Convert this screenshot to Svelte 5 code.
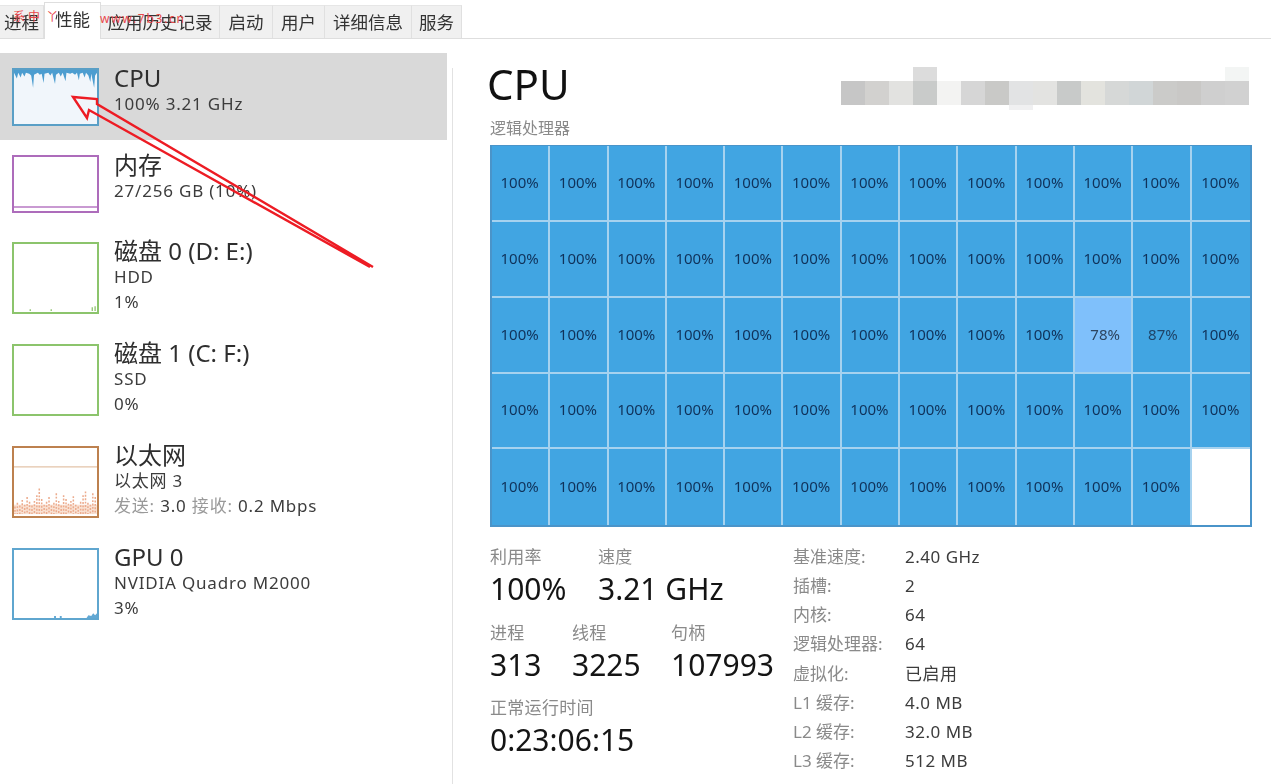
<script>
  const tabs = [
    { label: '进程', w: 44 },
    { label: '性能', w: 57, active: true },
    { label: '应用历史记录', w: 119 },
    { label: '启动', w: 53 },
    { label: '用户', w: 52 },
    { label: '详细信息', w: 87 },
    { label: '服务', w: 50 }
  ];

  const mosaic = [
    '#c6c6c6', '#d2d1cf', '#e2e2e0', '#c9cbca', '#f3f3f2', '#d6d6d6', '#c9c9c7', '#e2e3e4', '#e3e3e1',
    '#c8cac9', '#e3e3de', '#d6d8d7', '#d1d6d7', '#cbcbc9', '#c9c8c6', '#cfcfcf', '#d1d1d1'
  ];

  const cells = [];
  for (let i = 0; i < 65; i++) {
    let v = '100%';
    if (i === 36) v = '78%';
    if (i === 37) v = '87%';
    if (i === 64) v = '';
    cells.push(v);
  }

  const specs = [
    ['基准速度:', '2.40 GHz'], ['插槽:', '2'], ['内核:', '64'], ['逻辑处理器:', '64'],
    ['虚拟化:', '已启用'], ['L1 缓存:', '4.0 MB'], ['L2 缓存:', '32.0 MB'], ['L3 缓存:', '512 MB']
  ];

  // x offset, depth of the blue trace hanging from the top of the CPU thumbnail
  const cpuTrace = [
    [0,3],[3,9],[4.5,3],[7,8],[8.5,3],[11,7],[12.5,3],[16,4],[18,6],[20,19],[21,5],[25,3],[27,5],[29,4],
    [31,14],[32,4],[36,3],[38,6],[40,3],[43,15],[44,5],[47,3],[49,7],[51,3],[54,12],[55,3],[59,4],
    [61,3],[64,5],[66,3],[68,11],[69,4],[72,3],[74,8],[75.5,3],[78,6],[80,13],[81,4],[84,19],[85,6],[87,3]
  ];
  const cpuPts = '0,0 ' + cpuTrace.map((p) => `${p[0]},${p[1]}`).join(' ') + ' 87,0';

  const ethHeights = [8,12,9,15,10,18,13,9,14,20,27,16,10,13,18,9,12,22,14,9,20,16,11,14,19,10,8,13,20,24,12,10,22,18];

  const items = [
    { title: 'CPU', lines: ['100% 3.21 GHz'], kind: 'cpu', h: 58, selected: true },
    { title: '内存', lines: ['27/256 GB (10%)'], kind: 'mem', h: 58 },
    { title: '磁盘 0 (D: E:)', lines: ['HDD', '1%'], kind: 'disk', h: 72 },
    { title: '磁盘 1 (C: F:)', lines: ['SSD', '0%'], kind: 'disk', h: 72 },
    { title: '以太网', lines: ['以太网 3'], net: ['发送:', '3.0', '接收:', '0.2 Mbps'], kind: 'eth', h: 72 },
    { title: 'GPU 0', lines: ['NVIDIA Quadro M2000', '3%'], kind: 'gpu', h: 72 }
  ];
</script>

<div class="page">
  <nav class="tabs soft">
    {#each tabs as t}
      <div class="tab" class:active={t.active} style="width:{t.w}px">{t.label}</div>
    {/each}
  </nav>

  <div class="main">
    <aside class="side soft">
      {#each items as it}
        <div class="item" class:selected={it.selected} class:tall={it.h === 72}>
          <div class="thumb {it.kind}" style="height:{it.h}px">
            {#if it.kind === 'cpu'}
              <svg viewBox="0 0 87 58" preserveAspectRatio="none"><polygon points={cpuPts} fill="#4c9dd0" /></svg>
            {:else if it.kind === 'mem'}
              <div class="memline"></div>
            {:else if it.kind === 'disk'}
              {#if it.title.includes('D:')}
                <svg viewBox="0 0 87 72" preserveAspectRatio="none"><path d="M17 71V69M39 71V69M82 71V67M85 71V66" stroke="#7fbb5a" stroke-width="1.2" fill="none" /></svg>
              {/if}
            {:else if it.kind === 'eth'}
              <svg viewBox="0 0 87 72" preserveAspectRatio="none">
                <line x1="0" y1="20" x2="87" y2="20" stroke="#e3c3a8" stroke-width="1.4" />
                <rect x="0" y="60" width="87" height="10" fill="#f9e2d4" />
                {#each ethHeights as h, i}
                  <line x1={1 + i * 2.55} y1={70 - h} x2={1 + i * 2.55} y2="70" stroke="#ecab8d" stroke-width="1.6" stroke-dasharray="2 1.6" />
                {/each}
              </svg>
            {:else if it.kind === 'gpu'}
              <svg viewBox="0 0 87 72" preserveAspectRatio="none"><path d="M76 72L78 69L81 70L83 67L85 69L87 67V72ZM42 72V70H44V72ZM48 72V70H50V72Z" fill="#62a8d4" /></svg>
            {/if}
          </div>
          <div class="info">
            <div class="title">{it.title}</div>
            {#each it.lines as l}
              <div class="line">{l}</div>
            {/each}
            {#if it.net}
              <div class="line net">
                <span class="muted">{it.net[0]}</span> {it.net[1]} <span class="muted">{it.net[2]}</span> {it.net[3]}
              </div>
            {/if}
          </div>
        </div>
      {/each}
    </aside>

    <section class="detail">
      <header class="head">
        <h1 class="soft">CPU</h1>
        <div class="mosaic">
          {#each mosaic as c, i}
            <span class="px" style="background:{c}">
              {#if i === 3}<i class="up" style="background:#dcdcdc"></i>{/if}
              {#if i === 16}<i class="up" style="background:#f3f5f4"></i>{/if}
              {#if i === 7}<i class="down"></i>{/if}
            </span>
          {/each}
        </div>
      </header>
      <div class="gridlabel soft">逻辑处理器</div>
      <div class="grid soft">
        {#each cells as c, i}
          <div class="cell" class:light={i === 36} class:empty={i === 64} class:mid={i === 37}>{c}</div>
        {/each}
      </div>

      <div class="stats soft">
        <div class="left">
          <div class="row">
            <div class="stat w108"><div class="lbl">利用率</div><div class="val">100%</div></div>
            <div class="stat"><div class="lbl">速度</div><div class="val">3.21 GHz</div></div>
          </div>
          <div class="row">
            <div class="stat w82"><div class="lbl">进程</div><div class="val">313</div></div>
            <div class="stat w99"><div class="lbl">线程</div><div class="val">3225</div></div>
            <div class="stat"><div class="lbl">句柄</div><div class="val">107993</div></div>
          </div>
          <div class="row">
            <div class="stat"><div class="lbl">正常运行时间</div><div class="val">0:23:06:15</div></div>
          </div>
        </div>
        <div class="specs">
          {#each specs as s}
            <div class="spec"><span class="k">{s[0]}</span><span class="v">{s[1]}</span></div>
          {/each}
        </div>
      </div>
    </section>
  </div>

  <svg class="arrow" viewBox="0 0 1271 784">
    <polyline points="373,267 97,104 97,99 73,97 87,118 89,110 370,267" fill="none" stroke="#ed1c24" stroke-width="2.4" stroke-linejoin="miter" />
  </svg>
  <div class="wm wm1">系&nbsp;中&nbsp;&nbsp;丫</div>
  <div class="wm wm2">www.7b3.cn</div>
</div>

<style>
  :global(body) {
    margin: 0;
    background: #fff;
  }
  .page {
    position: relative;
    width: 1271px;
    height: 784px;
    overflow: hidden;
    background: #fff;
    color: #333;
    font-family: "Noto Sans", "Noto Sans CJK SC", sans-serif;
  }
  .soft {
    filter: blur(0.45px);
  }
  .tabs {
    display: flex;
    align-items: flex-end;
    height: 39px;
    box-sizing: border-box;
    border-bottom: 1px solid #dedede;
  }
  .tab {
    box-sizing: border-box;
    height: 33px;
    display: flex;
    align-items: center;
    justify-content: center;
    background: #f0f0f0;
    border-right: 1px solid #e0e0e0;
    border-top: 1px solid #e6e6e6;
    font-size: 17.5px;
    line-height: 24px;
    color: #333;
    white-space: nowrap;
  }
  .tab.active {
    height: 37px;
    background: #fff;
    border: 1px solid #dedede;
    border-bottom: none;
    margin-bottom: -1px;
    padding-bottom: 4px;
  }
  .main {
    display: flex;
    padding-top: 14px;
  }
  .side {
    width: 447px;
    flex: none;
  }
  .item {
    display: flex;
    padding: 15px 12px 14px;
    gap: 15px;
  }
  .item.tall {
    padding-bottom: 15px;
  }
  .item.selected {
    background: #d9d9d9;
  }
  .thumb {
    box-sizing: border-box;
    width: 87px;
    flex: none;
    border: 2px solid;
    background: #fff;
    position: relative;
    overflow: hidden;
  }
  .thumb svg {
    display: block;
    width: 100%;
    height: 100%;
  }
  .cpu { border-color: #5a9fc6; background: #f1f6fb; }
  .mem { border-color: #ad6cbb; }
  .memline {
    position: absolute;
    left: 0;
    right: 0;
    bottom: 3px;
    height: 2px;
    background: #c99ad2;
  }
  .disk { border-color: #8cc46c; }
  .eth { border-color: #bd814f; }
  .gpu { border-color: #5fa6cf; }
  .info {
    min-width: 0;
    margin: -4px 0 -2px;
  }
  .tall .info {
    margin-top: -5px;
  }
  .title {
    font-size: 24px;
    line-height: 27px;
    color: #2e2e2e;
    white-space: nowrap;
  }
  .line {
    font-size: 17px;
    letter-spacing: 0.8px;
    line-height: 25px;
    color: #3c3c3c;
    white-space: nowrap;
  }
  .muted { color: #999; }
  .detail {
    margin-left: 5px;
    border-left: 1px solid #e2e2e2;
    margin-top: 15px;
    padding-left: 37px;
    width: 762px;
    height: 716px;
    flex: none;
  }
  .head {
    display: flex;
    justify-content: space-between;
    align-items: flex-start;
    height: 46px;
  }
  h1 {
    margin: -12px 0 0 -3px;
    font-size: 42px;
    font-weight: 400;
    line-height: 56px;
    color: #111;
  }
  .mosaic {
    display: flex;
    margin: 13px 3px 0 0;
  }
  .px {
    width: 24px;
    height: 24px;
    position: relative;
    display: block;
  }
  .up {
    position: absolute;
    left: 0;
    top: -14px;
    width: 24px;
    height: 14px;
  }
  .down {
    position: absolute;
    left: 0;
    bottom: -5px;
    width: 24px;
    height: 5px;
    background: #f0f0f1;
  }
  .gridlabel {
    font-size: 16px;
    line-height: 20px;
    color: #8a8a8a;
    margin-top: 4px;
    height: 27px;
  }
  .grid {
    box-sizing: border-box;
    width: 762px;
    height: 382px;
    display: grid;
    grid-template-columns: repeat(12, 56.3px) 1fr;
    grid-template-rows: 74px 74px 74px 73px 1fr;
    gap: 2px;
    background: #a6d2ef;
    border: 2px solid #4a94c9;
    border-top-width: 1px;
  }
  .cell {
    background: #41a5e2;
    display: flex;
    align-items: center;
    justify-content: center;
    padding: 0 1px 3px 0;
    font-size: 15px;
    color: #10325a;
  }
  .cell.light { background: #7fc0fb; color: #2d4560; padding-left: 5px; }
  .cell.mid { color: #1f4468; padding-left: 4px; }
  .cell.empty { background: #fff; }
  .stats {
    display: flex;
    margin-top: 18px;
  }
  .left {
    width: 303px;
    flex: none;
  }
  .row {
    display: flex;
    height: 75.5px;
  }
  .w108 { width: 108px; }
  .w82 { width: 82px; }
  .w99 { width: 99px; }
  .lbl {
    font-size: 17px;
    letter-spacing: 0.3px;
    line-height: 24px;
    color: #8a8a8a;
  }
  .val {
    font-size: 30px;
    line-height: 40px;
    color: #141414;
    white-space: nowrap;
  }
  .specs {
    display: flex;
    flex-direction: column;
  }
  .spec {
    display: flex;
    height: 29.15px;
    line-height: 24px;
    font-size: 17px;
  }
  .k {
    width: 112px;
    color: #8a8a8a;
    white-space: nowrap;
  }
  .v {
    color: #3c3c3c;
    letter-spacing: 0.5px;
  }
  .arrow {
    position: absolute;
    inset: 0;
    width: 1271px;
    height: 784px;
    pointer-events: none;
  }
  .wm {
    position: absolute;
    color: #e9494c;
    font-size: 12px;
    line-height: 14px;
    white-space: nowrap;
  }
  .wm1 { left: 13px; top: 10px; }
  .wm2 { left: 100px; top: 12px; letter-spacing: 1.7px; }
</style>
